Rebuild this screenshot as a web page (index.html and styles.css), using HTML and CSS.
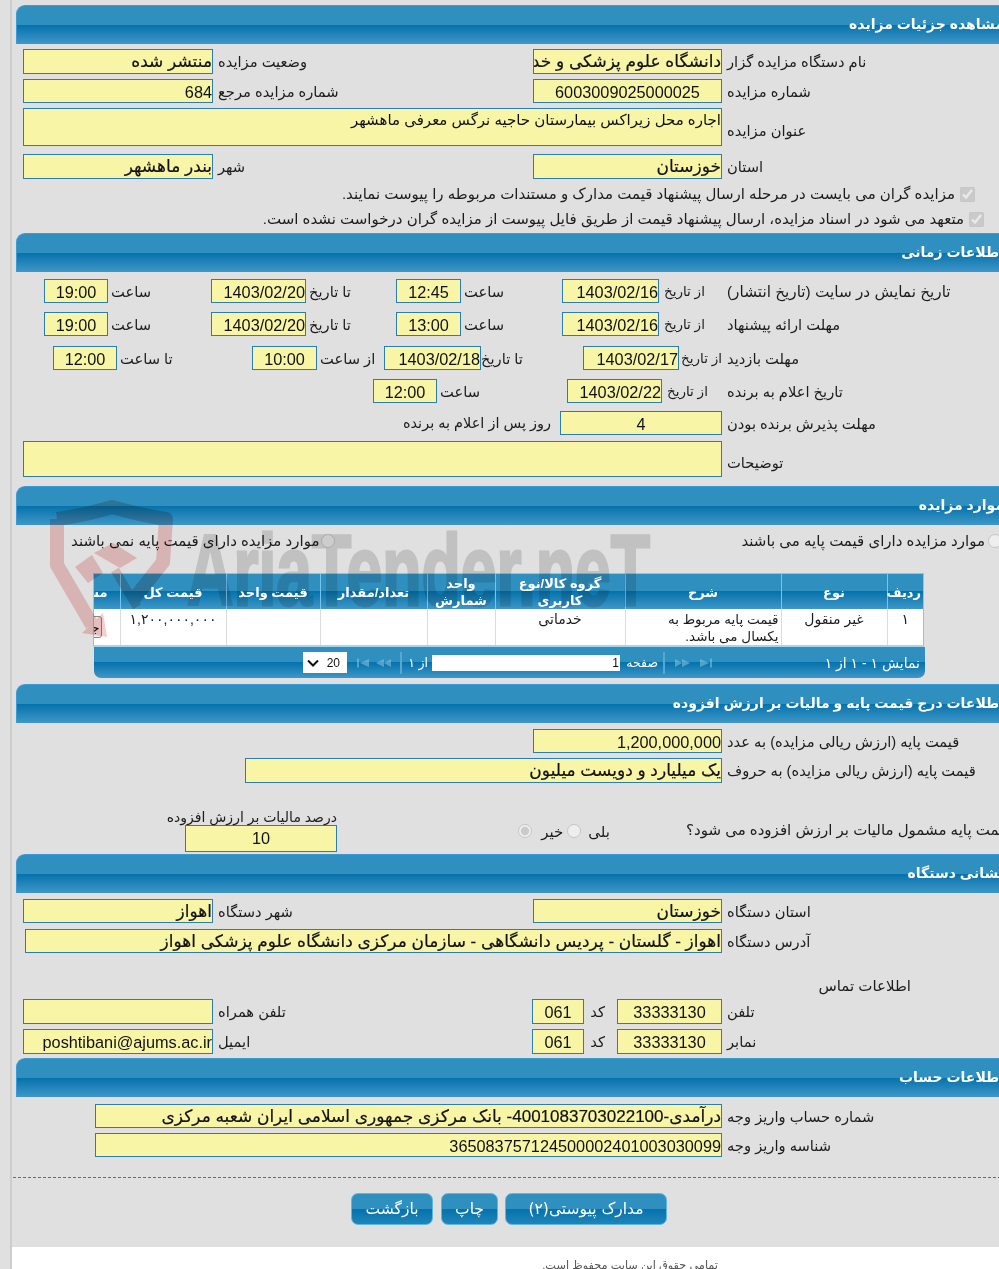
FILE: index.html
```html
<!DOCTYPE html>
<html lang="fa" dir="rtl">
<head>
<meta charset="utf-8">
<title>مشاهده جزئیات مزایده</title>
<link rel="stylesheet" href="styles.css">
</head>
<body>
<div class="shell">
<main class="content">

<section>
  <h2 class="bar">مشاهده جزئیات مزایده</h2>
  <div class="row g-two h25 mt5"><label class="lb">نام دستگاه مزایده گزار</label><div class="fld fa">دانشگاه علوم پزشکی و خدمات بهداشتی درمانی</div><label class="lb">وضعیت مزایده</label><div class="fld fa">منتشر شده</div></div>
  <div class="row g-two h24 mt5"><label class="lb">شماره مزایده</label><div class="fld ctr">6003009025000025</div><label class="lb">شماره مزایده مرجع</label><div class="fld">684</div></div>
  <div class="row g-one h38 mt5"><label class="lb low">عنوان مزایده</label><div class="fld area">اجاره محل زیراکس بیمارستان حاجیه نرگس معرفی ماهشهر</div></div>
  <div class="row g-two h25 mt8"><label class="lb">استان</label><div class="fld fa">خوزستان</div><label class="lb">شهر</label><div class="fld fa">بندر ماهشهر</div></div>
  <label class="check c1"><input type="checkbox" checked disabled>مزایده گران می بایست در مرحله ارسال پیشنهاد قیمت مدارک و مستندات مربوطه را پیوست نمایند.</label>
  <label class="check c2"><input type="checkbox" checked disabled>متعهد می شود در اسناد مزایده، ارسال پیشنهاد قیمت از طریق فایل پیوست از مزایده گران درخواست نشده است.</label>
</section>

<section class="s2">
  <h2 class="bar">اطلاعات زمانی</h2>
  <div class="row g-t1 h24 mt7"><label class="lb wide">تاریخ نمایش در سایت (تاریخ انتشار)</label><label class="lb d">از تاریخ</label><div class="fld">1403/02/16</div><label class="lb s">ساعت</label><div class="fld ctr">12:45</div><label class="lb s">تا تاریخ</label><div class="fld">1403/02/20</div><label class="lb s">ساعت</label><div class="fld ctr">19:00</div></div>
  <div class="row g-t1 h24 mt9"><label class="lb">مهلت ارائه پیشنهاد</label><label class="lb d">از تاریخ</label><div class="fld">1403/02/16</div><label class="lb s">ساعت</label><div class="fld ctr">13:00</div><label class="lb s">تا تاریخ</label><div class="fld">1403/02/20</div><label class="lb s">ساعت</label><div class="fld ctr">19:00</div></div>
  <div class="row g-t3 h24 mt10"><label class="lb">مهلت بازدید</label><label class="lb d">از تاریخ</label><div class="fld">1403/02/17</div><label class="lb z">تا تاریخ</label><div class="fld">1403/02/18</div><label class="lb s">از ساعت</label><div class="fld ctr">10:00</div><label class="lb s">تا ساعت</label><div class="fld ctr">12:00</div></div>
  <div class="row g-t4 h24 mt9"><label class="lb">تاریخ اعلام به برنده</label><label class="lb d">از تاریخ</label><div class="fld">1403/02/22</div><label class="lb s">ساعت</label><div class="fld ctr">12:00</div></div>
  <div class="row g-t5 h24 mt8"><label class="lb">مهلت پذیرش برنده بودن</label><div class="fld ctr">4</div><label class="lb after">روز پس از اعلام به برنده</label></div>
  <div class="row g-one h36 mt6"><label class="lb low">توضیحات</label><div class="fld"></div></div>
</section>

<section class="s3">
  <h2 class="bar">موارد مزایده</h2>
  <div class="radios"><label class="rd r1"><input type="radio" name="base" disabled>موارد مزایده دارای قیمت پایه می باشند</label><label class="rd r2"><input type="radio" name="base" disabled>موارد مزایده دارای قیمت پایه نمی باشند</label></div>
  <div class="tablewrap">
    <table class="grid">
      <colgroup><col class="c-a"><col class="c-b"><col class="c-c"><col class="c-d"><col class="c-e"><col class="c-f"><col class="c-g"><col class="c-h"><col class="c-i"></colgroup>
      <thead><tr><th><span class="tx">ردیف</span></th><th><span class="tx">نوع</span></th><th><span class="tx">شرح</span></th><th><span class="tx">گروه کالا/نوع کاربری</span></th><th><span class="tx">واحد شمارش</span></th><th><span class="tx">تعداد/مقدار</span></th><th><span class="tx">قیمت واحد</span></th><th><span class="tx">قیمت کل</span></th><th class="last"><span class="tx">مشاهده</span></th></tr></thead>
      <tbody><tr><td class="mid">۱</td><td class="mid">غیر منقول</td><td class="desc">قیمت پایه مربوط به یکسال می باشد.</td><td class="mid">خدماتی</td><td></td><td></td><td></td><td class="mid">۱,۲۰۰,۰۰۰,۰۰۰</td><td class="last"><button class="mini" type="button">جزئیات</button></td></tr></tbody>
    </table>
  </div>
  <div class="pager">
    <span class="status">نمایش ۱ - ۱ از ۱</span>
    <svg class="pi p1" viewBox="0 0 13 10" width="13" height="10"><path d="M0 1l9 4-9 4zM10 0.5h2v9h-2z"/></svg>
    <svg class="pi p2" viewBox="0 0 15 10" width="15" height="10"><path d="M0 1l7 4-7 4zM7 1l8 4-8 4z"/></svg>
    <span class="sep s-a"></span>
    <span class="pg-l">صفحه</span>
    <span class="pg-in">1</span>
    <span class="pg-of">از ۱</span>
    <span class="sep s-b"></span>
    <svg class="pi p3" viewBox="0 0 15 10" width="15" height="10"><path d="M15 1l-7 4 7 4zM8 1l-8 4 8 4z"/></svg>
    <svg class="pi p4" viewBox="0 0 13 10" width="13" height="10"><path d="M13 1l-9 4 9 4zM1 0.5h2v9h-2z"/></svg>
    <span class="sel-wrap"><select class="pg-sel"><option>20</option></select><svg class="chev" viewBox="0 0 12 8" width="12" height="8"><path d="M1 1.5l5 5 5-5"/></svg></span>
  </div>
</section>

<section class="s4">
  <h2 class="bar">اطلاعات درج قیمت پایه و مالیات بر ارزش افزوده</h2>
  <div class="row g-v1 h24 mt6"><label class="lb">قیمت پایه (ارزش ریالی مزایده) به عدد</label><div class="fld">1,200,000,000</div></div>
  <div class="row g-v2 h25 mt5"><label class="lb">قیمت پایه (ارزش ریالی مزایده) به حروف</label><div class="fld fa">یک میلیارد و دویست میلیون</div></div>
  <div class="row g-tax mt26">
    <label class="lb tax-q">قیمت پایه مشمول مالیات بر ارزش افزوده می شود؟</label>
    <div class="tax-r"><label class="rd yes">بلی<input type="radio" name="tax" disabled></label><label class="rd no">خیر<input type="radio" name="tax" checked disabled></label></div>
    <div class="tax-p"><label class="tax-l">درصد مالیات بر ارزش افزوده</label><div class="fld ctr h24">10</div></div>
  </div>
</section>

<section class="s5">
  <h2 class="bar">نشانی دستگاه</h2>
  <div class="row g-two h24 mt6"><label class="lb">استان دستگاه</label><div class="fld fa">خوزستان</div><label class="lb">شهر دستگاه</label><div class="fld fa">اهواز</div></div>
  <div class="row g-addr h24 mt6"><label class="lb">آدرس دستگاه</label><div class="fld fa">اهواز - گلستان - پردیس دانشگاهی - سازمان مرکزی دانشگاه علوم پزشکی اهواز</div></div>
  <div class="contact">اطلاعات تماس</div>
  <div class="row g-c h25 mt3"><label class="lb">تلفن</label><div class="fld ctr">33333130</div><label class="lb kod">کد</label><div class="fld ctr">061</div><label class="lb">تلفن همراه</label><div class="fld"></div></div>
  <div class="row g-c h25 mt5"><label class="lb">نمابر</label><div class="fld ctr">33333130</div><label class="lb kod">کد</label><div class="fld ctr">061</div><label class="lb">ایمیل</label><div class="fld">poshtibani@ajums.ac.ir</div></div>
</section>

<section class="s6">
  <h2 class="bar">اطلاعات حساب</h2>
  <div class="row g-acc h24 mt7"><label class="lb">شماره حساب واریز وجه</label><div class="fld fa">درآمدی-4001083703022100- بانک مرکزی جمهوری اسلامی ایران شعبه مرکزی</div></div>
  <div class="row g-acc h24 mt5"><label class="lb">شناسه واریز وجه</label><div class="fld">365083757124500002401003030099</div></div>
</section>

<hr class="dash">
<div class="actions"><button class="btn b1" type="button">مدارک پیوستی(۲)</button><button class="btn b2" type="button">چاپ</button><button class="btn b3" type="button">بازگشت</button></div>
</main>
<footer class="foot">تمامی حقوق این سایت محفوظ است.</footer>
</div>

<svg class="wm" viewBox="0 0 660 160" width="660" height="160" aria-hidden="true">
  <g class="wm-red">
    <path class="wm-shield" d="M43 34 Q72 30 98 22 Q126 30 152 34 L149 77 L119 115 M43 34 L43 80 L78 140"/>
    <path class="wm-shield thin" d="M101 85 L123 122"/>
    <polygon points="61,82 78,70 89,88 74,98"/>
    <polygon points="80,68 99,58 123,73 106,83"/>
    <polygon points="68,148 89,128 93,152"/>
  </g>
  <text class="wm-text" x="173" y="120" textLength="463" lengthAdjust="spacingAndGlyphs" direction="ltr">AriaTender.neT</text>
</svg>
</body>
</html>
```
FILE: styles.css
```css
html, body { margin: 0; padding: 0; height: 1269px; overflow: hidden; background: #e0e0e0; }
body { position: relative; font-family: "Liberation Sans", "DejaVu Sans", sans-serif; font-size: 15px; color: #1c1c1c; }
* { box-sizing: border-box; }

.shell { width: 1006px; margin-right: -17px; margin-left: 10px; border-left: 2px solid #cdcdcd; }
.content { height: 1247px; padding: 5px 0 0 4px; }
section { width: 1000px; }

.bar {
  height: 39px; margin: 0; padding: 0 12px 0 0; line-height: 37px; color: #fff; font-size: 14px; font-weight: bold; white-space: nowrap;
  border-top-left-radius: 9px; border-top: 1px solid #3a9bd8; border-left: 1px solid #3a9bd8;
  background: linear-gradient(#2f90c0 0, #2f90c0 49%, #0572ab 50%, #3f97c8 100%);
}

.row { display: grid; align-items: center; }
.h24 { height: 24px; } .h25 { height: 25px; } .h36 { height: 36px; } .h38 { height: 38px; }
.mt3 { margin-top: 3px; } .mt5 { margin-top: 5px; } .mt6 { margin-top: 6px; } .mt7 { margin-top: 7px; } .mt8 { margin-top: 8px; } .mt9 { margin-top: 9px; } .mt10 { margin-top: 10px; } .mt26 { margin-top: 26px; }

.g-two { grid-template-columns: 294px 189px 320px 190px; }
.g-one { grid-template-columns: 294px 699px; }
.g-t1 { grid-template-columns: 294px 63px 97px 101px 65px 90px 95px 103px 64px; }
.g-t3 { grid-template-columns: 294px 43px 96px 102px 97px 67px 65px 135px 64px; }
.g-t4 { grid-template-columns: 294px 60px 95px 130px 64px; }
.g-t5 { grid-template-columns: 294px 162px auto; }
.g-v1 { grid-template-columns: 294px 189px; }
.g-v2 { grid-template-columns: 294px 477px; }
.g-addr { grid-template-columns: 294px 697px; }
.g-c { grid-template-columns: 294px 105px 33px 52px 319px 190px; }
.g-acc { grid-template-columns: 294px 627px; }
.g-tax { grid-template-columns: 330px 349px 152px; height: 40px; align-items: end; }

.lb { text-align: left; padding: 1px 0 0 5px; white-space: nowrap; line-height: 22px; font-size: 14.7px; }
.lb.s { padding-left: 3px; }
.lb.z { padding-left: 0; }
.lb.d { font-size: 13.5px; }
.lb.wide { font-size: 15.3px; }
.lb.low { margin-top: 6px; }
.after { text-align: right; padding: 0; margin-right: 9px; font-size: 14.5px; }
.kod { text-align: right; padding: 0 12px 0 0; }

.fld {
  height: 100%; padding: 0; overflow: hidden; white-space: nowrap; font-size: 16.3px; line-height: 25px; color: #111;
  background: #f8f6a6; border: 1px solid #2a7db5;
}
.fa { font-size: 17px; line-height: 24px; -webkit-text-stroke: 0.2px #111; }
.ctr { text-align: center; }
.area { white-space: normal; font-size: 15px; line-height: 21px; }

.check { display: flex; align-items: center; height: 24px; white-space: nowrap; }
.check input { width: 15px; height: 15px; margin: 0 0 0 5px; }
.c1 { margin-top: 3px; padding-right: 41px; }
.c2 { margin-top: 1px; padding-right: 32px; }

.s2 { padding-top: 2px; }
.s3 { margin-top: 9px; }
.radios { display: flex; height: 48px; padding-top: 6px; }
.rd { display: flex; align-items: center; height: 20px; white-space: nowrap; }
.rd input { width: 14px; height: 14px; margin: 0; }
.r1 { margin-right: 14px; }
.r1 input { margin-left: 3px; }
.r2 { margin-right: 406px; }
.r2 input { margin-left: 2px; }

.tablewrap { width: 831px; margin-right: 92px; height: 74px; overflow: hidden; border: 1px solid #8ac6e6; border-bottom: 2px solid #a9d3ea; background: #fff; }
.grid { width: 880px; border-collapse: collapse; table-layout: fixed; }
.c-a { width: 36px; } .c-b { width: 106px; } .c-c { width: 156px; } .c-d { width: 130px; } .c-e { width: 68px; } .c-f { width: 107px; } .c-g { width: 94px; } .c-h { width: 106px; } .c-i { width: 77px; }
.grid th {
  height: 35px; padding: 1px 2px 0; font-size: 13px; line-height: 17px; font-weight: bold; color: #fff; text-align: center;
  border-left: 1px solid #78c4ec;
  background: linear-gradient(#2f90c0 0, #2f90c0 49%, #0572ab 50%, #3f97c8 100%);
}
.tx { position: relative; z-index: 1; }
.grid th.last { text-align: right; padding-right: 12px; }
.grid td { height: 37px; padding: 2px 3px 0; vertical-align: top; font-size: 14px; line-height: 17px; border-left: 1px solid #dcdcdc; }
.grid td.mid { text-align: center; }
.grid td.desc { padding-right: 2px; font-size: 13.5px; }
.grid td.last { padding: 7px 18px 0 0; }
.mini { height: 22px; padding: 0 1px; font: 13px "DejaVu Sans", sans-serif; background: #eee; border: 1px solid #888; border-radius: 3px; }

.pager {
  display: flex; align-items: center; width: 831px; height: 31px; margin-right: 91px; padding-right: 5px; color: #fff; font-size: 12.5px;
  border-bottom-left-radius: 7px; border-bottom-right-radius: 7px;
  background: linear-gradient(#2f90c0 0, #2f90c0 49%, #0572ab 50%, #3f97c8 100%);
}
.status { width: 207px; white-space: nowrap; font-size: 14px; }
.pi { fill: #8cc5e4; opacity: .55; flex: none; }
.p2 { margin-right: 10px; }
.sep { width: 2px; height: 22px; background: #5aa6cf; }
.s-a { margin-right: 10px; }
.pg-l { margin-right: 5px; width: 35px; white-space: nowrap; }
.pg-in { width: 188px; height: 16px; margin-right: 3px; padding: 0 1px 0 0; line-height: 16px; background: #fff; color: #111; font-size: 12px; }
.pg-of { margin-right: 4px; width: 21px; white-space: nowrap; }
.s-b { margin-right: 5px; }
.p3 { margin-right: 9px; }
.p4 { margin-right: 7px; }
.sel-wrap { position: relative; display: block; width: 44px; height: 21px; margin-right: 9px; }
.pg-sel { display: block; width: 44px; height: 21px; padding: 0 7px 0 0; border: 0; border-radius: 0; appearance: none; background: #fff; color: #111; font-size: 12px; font-family: "Liberation Sans", sans-serif; }
.chev { position: absolute; left: 4px; top: 7px; fill: none; stroke: #111; stroke-width: 2; pointer-events: none; }

.s4 { margin-top: 6px; }
.tax-q { padding: 0; margin-bottom: 11px; font-size: 15px; }
.tax-r { display: flex; padding-right: 76px; align-items: center; height: 20px; margin-bottom: 10px; }
.tax-r input { margin-bottom: 3px; }
.yes input { margin-right: 7px; }
.no { margin-right: 4px; }
.no input { margin-right: 9px; }
.tax-p { width: 152px; }
.tax-l { display: block; text-align: left; white-space: nowrap; line-height: 16px; font-size: 14px; }

.s5 { margin-top: 5px; }
.contact { margin-top: 23px; padding-right: 105px; line-height: 20px; }
.s6 { margin-top: 4px; }

.dash { margin: 20px -4px 0 0; width: 1007px; height: 1px; border: 0; background: repeating-linear-gradient(90deg, #2a7db5 0 3px, transparent 3px 5px); }
.actions { display: flex; gap: 7px; padding-right: 349px; margin-top: 15px; }
.btn {
  height: 32px; padding: 0; color: #fff; font: 15.5px "DejaVu Sans", sans-serif; border: 1px solid #5db6e4; border-radius: 7px;
  background: linear-gradient(#2f90c0 0, #2f90c0 49%, #0572ab 50%, #1f85b9 100%);
}
.b1 { width: 162px; } .b2 { width: 57px; } .b3 { width: 82px; margin-right: 1px; }

.foot { height: 22px; padding: 11px 298px 0 0; background: #fff; color: #555; font-size: 11.3px; line-height: 14px; filter: blur(.4px); }

.wm { position: absolute; left: 14px; top: 485px; direction: ltr; pointer-events: none; mix-blend-mode: multiply; }
.wm-red polygon { fill: #f6cccc; }
.wm-shield { fill: none; stroke: #f6cccc; stroke-width: 14; stroke-linejoin: round; }
.wm-shield.thin { stroke-width: 9; }
.wm-text { font-family: "Liberation Sans", sans-serif; font-weight: bold; font-size: 100px; fill: #dcdcdc; stroke: #dcdcdc; stroke-width: 3; }
```
